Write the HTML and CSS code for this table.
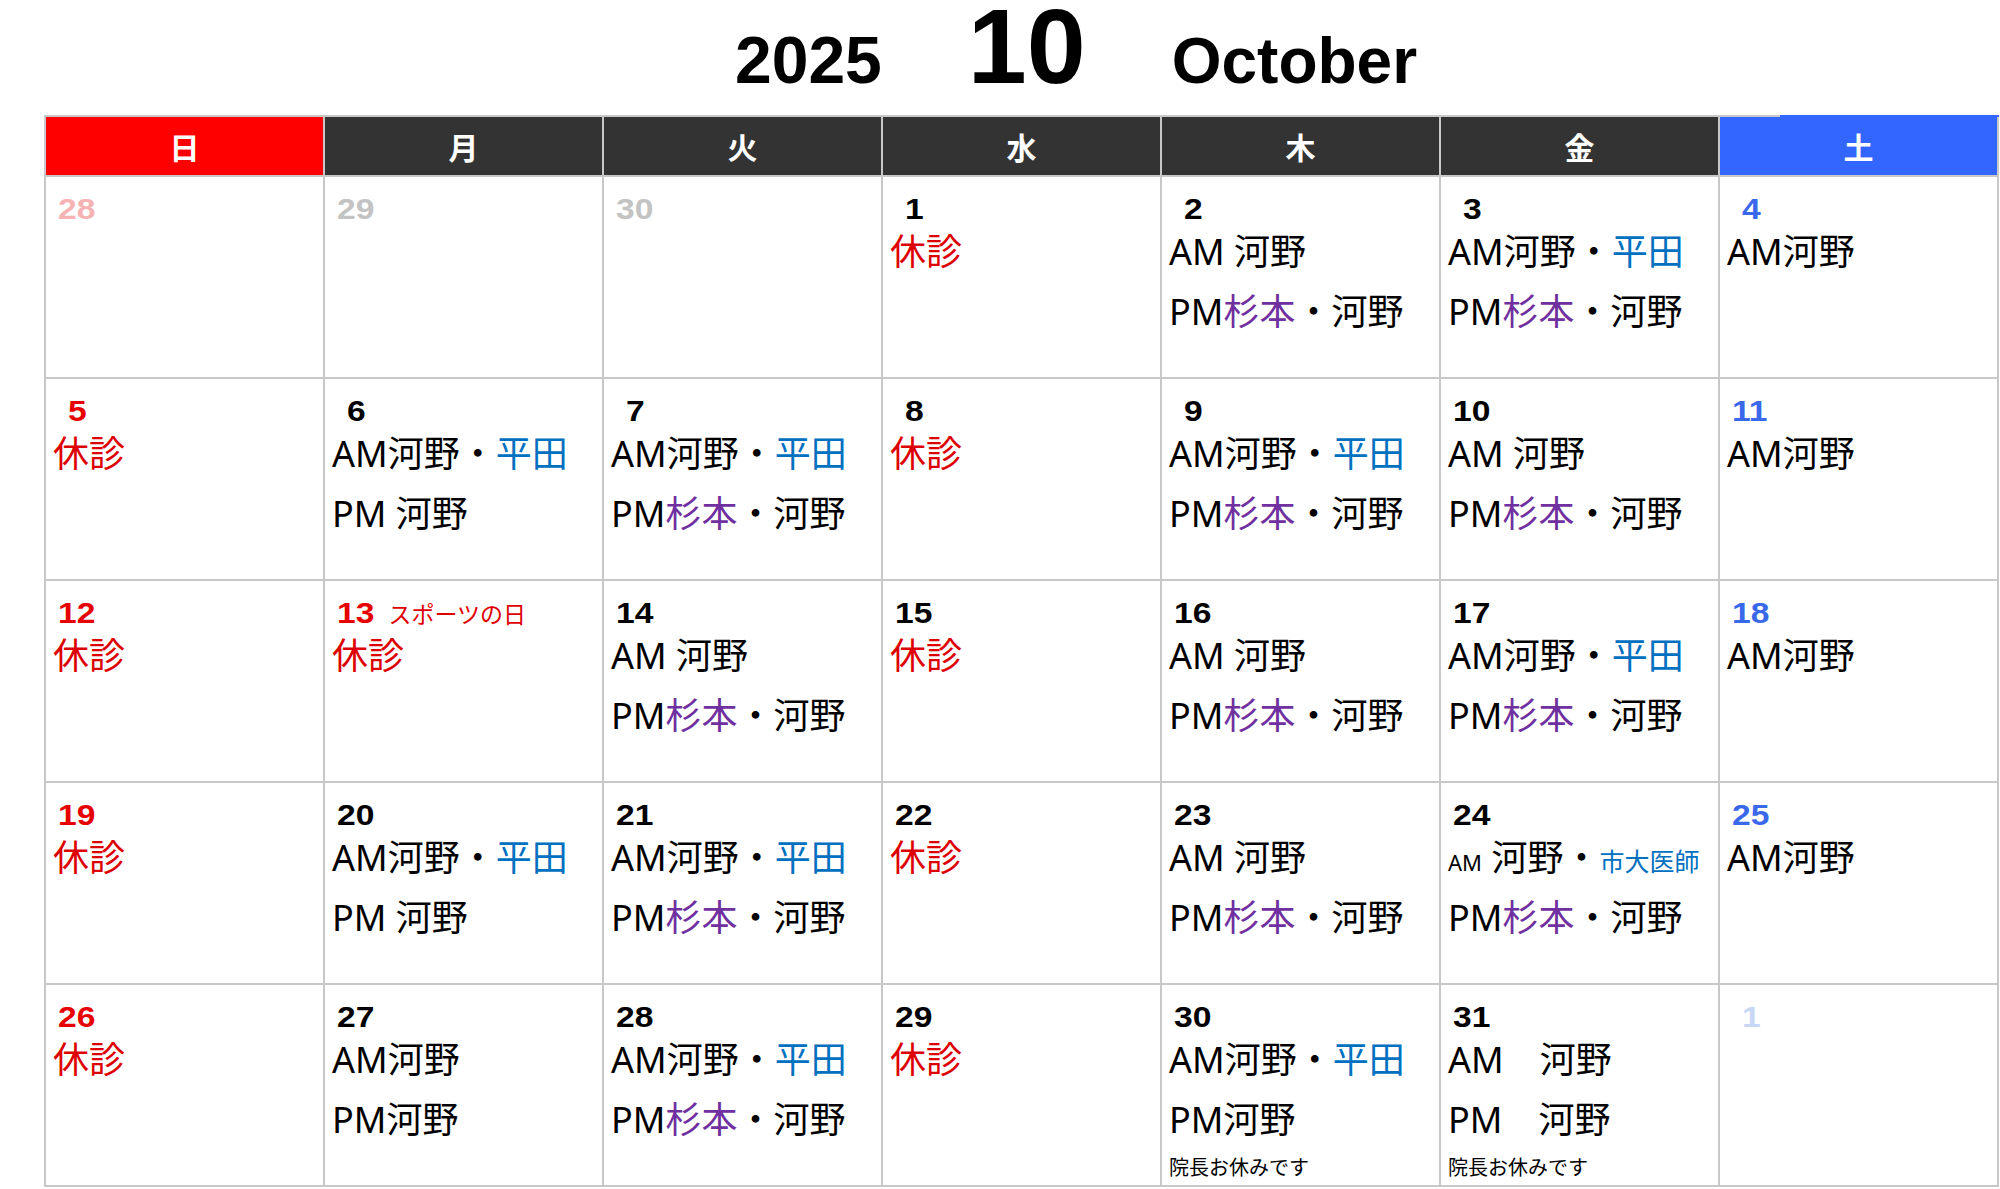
FILE: index.html
```html
<!DOCTYPE html>
<html lang="ja">
<head>
<meta charset="utf-8">
<title>2025年10月 診療カレンダー</title>
<link rel="stylesheet" href="styles.css">
</head>
<body>
<header class="title">
  <span class="year">2025</span>
  <span class="month">10</span>
  <span class="name">October</span>
</header>
<main class="cal">
  <div class="dow sun">日</div>
  <div class="dow">月</div>
  <div class="dow">火</div>
  <div class="dow">水</div>
  <div class="dow">木</div>
  <div class="dow">金</div>
  <div class="dow sat">土</div>

  <!-- week 1 -->
  <div class="day"><div class="date prev-sun"><span class="num">28</span></div></div>
  <div class="day"><div class="date prev"><span class="num">29</span></div></div>
  <div class="day"><div class="date prev"><span class="num">30</span></div></div>
  <div class="day"><div class="date"><span class="num one">1</span></div><div class="ln off">休診</div></div>
  <div class="day"><div class="date"><span class="num one">2</span></div><div class="ln">AM 河野</div><div class="ln">PM<span class="pu">杉本</span>・河野</div></div>
  <div class="day"><div class="date"><span class="num one">3</span></div><div class="ln">AM河野・<span class="bl">平田</span></div><div class="ln">PM<span class="pu">杉本</span>・河野</div></div>
  <div class="day last"><div class="date sat-c"><span class="num one">4</span></div><div class="ln">AM河野</div></div>

  <!-- week 2 -->
  <div class="day"><div class="date sun-c"><span class="num one">5</span></div><div class="ln off">休診</div></div>
  <div class="day"><div class="date"><span class="num one">6</span></div><div class="ln">AM河野・<span class="bl">平田</span></div><div class="ln">PM 河野</div></div>
  <div class="day"><div class="date"><span class="num one">7</span></div><div class="ln">AM河野・<span class="bl">平田</span></div><div class="ln">PM<span class="pu">杉本</span>・河野</div></div>
  <div class="day"><div class="date"><span class="num one">8</span></div><div class="ln off">休診</div></div>
  <div class="day"><div class="date"><span class="num one">9</span></div><div class="ln">AM河野・<span class="bl">平田</span></div><div class="ln">PM<span class="pu">杉本</span>・河野</div></div>
  <div class="day"><div class="date"><span class="num">10</span></div><div class="ln">AM 河野</div><div class="ln">PM<span class="pu">杉本</span>・河野</div></div>
  <div class="day last"><div class="date sat-c"><span class="num">11</span></div><div class="ln">AM河野</div></div>

  <!-- week 3 -->
  <div class="day"><div class="date sun-c"><span class="num">12</span></div><div class="ln off">休診</div></div>
  <div class="day"><div class="date sun-c"><span class="num">13</span><span class="holiday">スポーツの日</span></div><div class="ln off">休診</div></div>
  <div class="day"><div class="date"><span class="num">14</span></div><div class="ln">AM 河野</div><div class="ln">PM<span class="pu">杉本</span>・河野</div></div>
  <div class="day"><div class="date"><span class="num">15</span></div><div class="ln off">休診</div></div>
  <div class="day"><div class="date"><span class="num">16</span></div><div class="ln">AM 河野</div><div class="ln">PM<span class="pu">杉本</span>・河野</div></div>
  <div class="day"><div class="date"><span class="num">17</span></div><div class="ln">AM河野・<span class="bl">平田</span></div><div class="ln">PM<span class="pu">杉本</span>・河野</div></div>
  <div class="day last"><div class="date sat-c"><span class="num">18</span></div><div class="ln">AM河野</div></div>

  <!-- week 4 -->
  <div class="day"><div class="date sun-c"><span class="num">19</span></div><div class="ln off">休診</div></div>
  <div class="day"><div class="date"><span class="num">20</span></div><div class="ln">AM河野・<span class="bl">平田</span></div><div class="ln">PM 河野</div></div>
  <div class="day"><div class="date"><span class="num">21</span></div><div class="ln">AM河野・<span class="bl">平田</span></div><div class="ln">PM<span class="pu">杉本</span>・河野</div></div>
  <div class="day"><div class="date"><span class="num">22</span></div><div class="ln off">休診</div></div>
  <div class="day"><div class="date"><span class="num">23</span></div><div class="ln">AM 河野</div><div class="ln">PM<span class="pu">杉本</span>・河野</div></div>
  <div class="day"><div class="date"><span class="num">24</span></div><div class="ln"><span class="am-s">AM</span> 河野・<span class="bl guest">市大医師</span></div><div class="ln">PM<span class="pu">杉本</span>・河野</div></div>
  <div class="day last"><div class="date sat-c"><span class="num">25</span></div><div class="ln">AM河野</div></div>

  <!-- week 5 -->
  <div class="day"><div class="date sun-c"><span class="num">26</span></div><div class="ln off">休診</div></div>
  <div class="day"><div class="date"><span class="num">27</span></div><div class="ln">AM河野</div><div class="ln">PM河野</div></div>
  <div class="day"><div class="date"><span class="num">28</span></div><div class="ln">AM河野・<span class="bl">平田</span></div><div class="ln">PM<span class="pu">杉本</span>・河野</div></div>
  <div class="day"><div class="date"><span class="num">29</span></div><div class="ln off">休診</div></div>
  <div class="day"><div class="date"><span class="num">30</span></div><div class="ln">AM河野・<span class="bl">平田</span></div><div class="ln">PM河野</div><div class="note">院長お休みです</div></div>
  <div class="day"><div class="date"><span class="num">31</span></div><div class="ln">AM　河野</div><div class="ln">PM　河野</div><div class="note">院長お休みです</div></div>
  <div class="day last"><div class="date next"><span class="num one">1</span></div></div>
</main>
</body>
</html>
```

FILE: styles.css
```css
* {
  box-sizing: border-box;
}

html,
body {
  margin: 0;
  padding: 0;
  background: #ffffff;
}

body {
  width: 2000px;
  height: 1189px;
  overflow: hidden;
  color: #000000;
  font-family: "Noto Sans", "Noto Sans CJK JP", sans-serif;
}

/* ---------- title ---------- */
.title {
  display: flex;
  align-items: baseline;
  height: 115px;
  padding-top: 1px;
  padding-left: 735px;
  font-family: "Liberation Sans", Arial, sans-serif;
  font-weight: bold;
}

.year {
  font-size: 66px;
  line-height: 90px;
}

.month {
  font-size: 106px;
  line-height: 90px;
  margin-left: 86px;
}

.name {
  font-size: 64px;
  line-height: 90px;
  margin-left: 86px;
}

/* ---------- calendar grid ---------- */
.cal {
  display: grid;
  grid-template-columns: repeat(6, 279px) 281px;
  grid-template-rows: 62px repeat(5, 202px);
  margin-left: 44px;
}

.dow {
  position: relative;
  display: flex;
  align-items: center;
  justify-content: center;
  background: #333333;
  color: #ffffff;
  border-top: 2px solid #c8c8c8;
  border-bottom: 2px solid #c8c8c8;
  border-left: 2px solid #c8c8c8;
  font-family: "Noto Sans CJK JP", sans-serif;
  font-weight: bold;
  font-size: 30px;
  line-height: 1;
}

.dow.sun {
  background: #ff0000;
}

.dow.sat {
  background: #3366ff;
  border-right: 2px solid #c8c8c8;
}

.dow.sat::before {
  content: "";
  position: absolute;
  top: -2px;
  left: 60px;
  right: -2px;
  height: 2px;
  background: #3366ff;
}

.day {
  border-left: 2px solid #c8c8c8;
  border-bottom: 2px solid #c8c8c8;
  padding: 16px 0 0 7px;
}

.day.last {
  border-right: 2px solid #c8c8c8;
}

/* ---------- date numbers ---------- */
.date {
  margin-left: 5px;
  height: 32px;
  font-family: "Liberation Sans", Arial, sans-serif;
  font-weight: bold;
  font-size: 30px;
  line-height: 32px;
  white-space: nowrap;
}

.num {
  display: inline-block;
  transform: scaleX(1.12);
  transform-origin: 0 50%;
}

.num.one {
  padding-left: 9px;
}

.prev-sun { color: #f5b3b3; }
.prev { color: #c3c3c3; }
.next { color: #c9d7f7; }
.sun-c { color: #e60000; }
.sat-c { color: #3a68ea; }

.holiday {
  margin-left: 18px;
  font-family: "Noto Sans CJK JP", sans-serif;
  font-weight: normal;
  font-size: 23px;
  color: #e00000;
}

/* ---------- schedule lines ---------- */
.ln {
  font-size: 36px;
  line-height: 60px;
  height: 60px;
  white-space: nowrap;
  margin-top: -3px;
}

.ln + .ln {
  margin-top: 0;
}

.off { color: #dd0000; }
.bl { color: #0070c0; }
.pu { color: #7030a0; }

.am-s {
  font-size: 22px;
}

.guest {
  font-size: 25px;
}

.note {
  margin-top: 5px;
  font-family: "Noto Sans CJK JP", sans-serif;
  font-size: 20px;
  line-height: 24px;
  white-space: nowrap;
}
```
